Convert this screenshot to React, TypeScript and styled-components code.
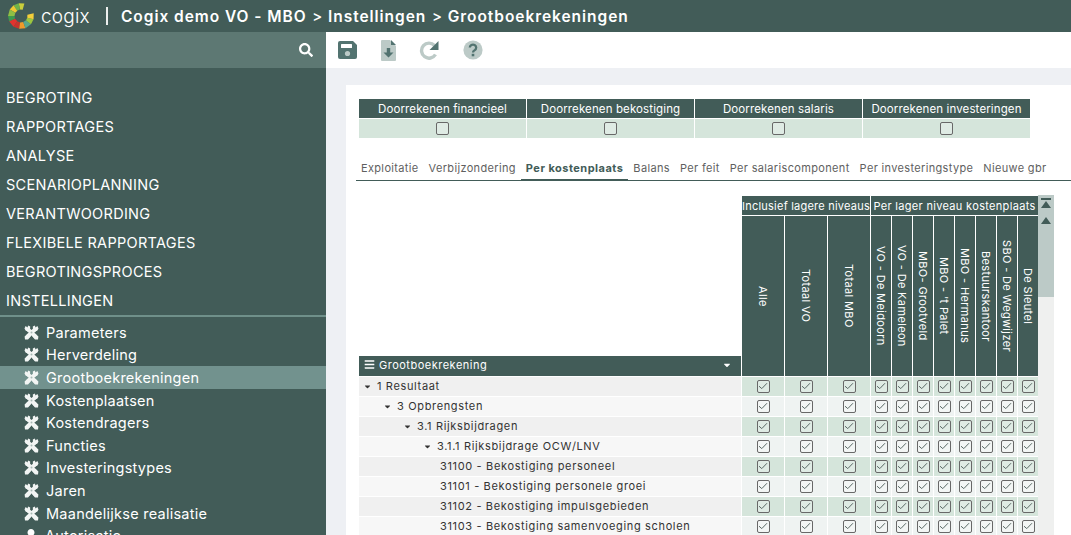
import React from "react";
import styled, { createGlobalStyle } from "styled-components";
import { FaSearch, FaBars, FaCaretDown, FaUser } from "react-icons/fa";

const Global = createGlobalStyle`
  html, body { margin: 0; padding: 0; height: 535px; overflow: hidden; background: #fff; }
  body { font-family: Inter, "Open Sans", sans-serif; }
  * { box-sizing: border-box; }
`;

const Page = styled.div`
  width: 1071px;
  height: 535px;
  display: flex;
  flex-direction: column;
  overflow: hidden;
`;

const Header = styled.header`
  height: 32px;
  flex: none;
  background: #425c58;
  color: #fff;
  display: flex;
  align-items: center;
  padding-left: 8px;
`;

const Brand = styled.span`
  font-size: 19px;
  font-weight: 300;
  margin-left: 7px;
  width: 65px;
  letter-spacing: 0.2px;
`;

const Divider = styled.span`
  width: 2px;
  height: 18px;
  background: #fff;
  opacity: 0.9;
  margin-right: 13px;
`;

const Crumb = styled.span`
  font-size: 15.5px;
  font-weight: 600;
  letter-spacing: 0.95px;
`;

const CrumbSep = styled.span`
  font-size: 15px;
  font-weight: 500;
  width: 21.5px;
  text-align: center;
`;

const Body = styled.div`
  flex: 1;
  display: flex;
  min-height: 0;
`;

const Sidebar = styled.aside`
  width: 326px;
  flex: none;
  background: #425c58;
  color: #fff;
  overflow: hidden;
`;

const SearchBar = styled.div`
  height: 36px;
  background: #5d7873;
  display: flex;
  align-items: center;
  justify-content: flex-end;
  padding-right: 13px;
  font-size: 14px;
  margin-bottom: 15px;
`;

const TopItem = styled.div<{ $open?: boolean }>`
  height: 29px;
  line-height: 29px;
  padding-left: 6px;
  font-size: 14.5px;
  font-weight: 400;
  text-transform: uppercase;
  letter-spacing: 0.3px;
  ${(p) => p.$open && "height: 31px; border-bottom: 2px solid #6f908a; margin-bottom: 4px;"}
`;

const SubItem = styled.div<{ $active?: boolean }>`
  height: 22.6px;
  display: flex;
  align-items: center;
  padding-left: 24px;
  gap: 7px;
  font-size: 14.5px;
  letter-spacing: 0.25px;
  background: ${(p) => (p.$active ? "#72928e" : "transparent")};
`;

const Main = styled.main`
  flex: 1;
  min-width: 0;
  display: flex;
  flex-direction: column;
  background: #eef0f4;
`;

const Toolbar = styled.div`
  height: 36px;
  flex: none;
  background: #fff;
  display: flex;
  align-items: center;
  padding-left: 11px;
  gap: 21px;
`;

const ToolButton = styled.span<{ $pushed?: boolean }>`
  width: 20px;
  height: 21px;
  display: flex;
  align-items: center;
  justify-content: center;
  margin-left: ${(p) => (p.$pushed ? 3 : 0)}px;
`;

const Content = styled.div`
  flex: 1;
  min-height: 0;
  padding: 17px 0 0 20px;
`;

const Panel = styled.section`
  height: 100%;
  background: #fff;
  padding: 14px 0 0 13px;
  overflow: hidden;
`;

const CalcTable = styled.div`
  display: grid;
  grid-template-columns: repeat(4, 167px);
  grid-template-rows: 19px 19px;
  gap: 1px;
`;

const CalcHead = styled.div`
  background: #425c58;
  color: #fff;
  font-size: 11.5px;
  letter-spacing: 0.12px;
  display: flex;
  align-items: center;
  justify-content: center;
`;

const CalcCell = styled.div`
  background: #d5e5db;
  display: flex;
  align-items: center;
  justify-content: center;
`;

const Tabs = styled.nav`
  display: flex;
  height: 23px;
  margin: 20px 0 15px -3px;
  border-bottom: 1px solid #425c58;
`;

const Tab = styled.span<{ $active?: boolean }>`
  padding: 0 5px;
  height: 22px;
  line-height: 20px;
  font-size: 11px;
  letter-spacing: ${(p) => (p.$active ? 0.48 : 0.34)}px;
  color: ${(p) => (p.$active ? "#425c58" : "#5f5f5f")};
  font-weight: ${(p) => (p.$active ? 700 : 400)};
  ${(p) => p.$active && "border-bottom: 2px solid #425c58; height: 23px;"}
`;

const MatrixWrap = styled.div`
  display: flex;
  align-items: flex-start;
`;

const Matrix = styled.div`
  display: grid;
  grid-template-columns: 382px repeat(3, 42px) repeat(8, 20px);
  grid-template-rows: 19px 160px;
  grid-auto-rows: 19px;
  gap: 1px;
`;

const Corner = styled.div`
  grid-row: 1 / span 2;
  display: flex;
  align-items: flex-end;
`;

const AccountHead = styled.div`
  width: 100%;
  height: 20px;
  background: #425c58;
  color: #fff;
  font-size: 11px;
  letter-spacing: 0.5px;
  display: flex;
  align-items: center;
  padding: 0 9px 3px 5px;
  gap: 4px;
`;

const HeadCaret = styled.span`
  margin-left: auto;
  display: flex;
  font-size: 10px;
`;

const GroupHead = styled.div<{ $span: number; $track: number }>`
  grid-column: span ${(p) => p.$span};
  background: #425c58;
  color: #fff;
  font-size: 11px;
  letter-spacing: ${(p) => p.$track}px;
  display: flex;
  align-items: center;
  justify-content: center;
  white-space: nowrap;
  overflow: hidden;
`;

const ColHead = styled.div`
  background: #425c58;
  color: #fff;
  font-size: 11px;
  letter-spacing: 0.35px;
  writing-mode: vertical-rl;
  display: flex;
  align-items: center;
  justify-content: center;
  white-space: nowrap;
  overflow: hidden;
`;

const RowLabel = styled.div<{ $level: number; $leaf?: boolean; $odd: boolean }>`
  background: ${(p) => (p.$odd ? "#f0f0f0" : "#f7f7f7")};
  color: #333;
  font-size: 11px;
  letter-spacing: 0.65px;
  display: flex;
  align-items: center;
  gap: 5px;
  white-space: nowrap;
  padding: 0 0 1px ${(p) => (p.$leaf ? 81 : 4 + p.$level * 20)}px;
`;

const RowCaret = styled.span`
  display: flex;
  font-size: 9px;
`;

const Cell = styled.div<{ $odd: boolean }>`
  background: ${(p) => (p.$odd ? "#d5e5db" : "#eff3f2")};
  display: flex;
  align-items: center;
  justify-content: center;
  padding-bottom: 1px;
`;

const Box = styled.span`
  width: 13px;
  height: 13px;
  border: 1.5px solid #686868;
  border-radius: 2px;
  background: rgba(255, 255, 255, 0.25);
  display: flex;
  align-items: center;
  justify-content: center;
`;

const Scrollbar = styled.div`
  width: 16px;
  height: 340px;
  margin-top: -1px;
  background: #eff0ef;
  flex: none;
`;

const Thumb = styled.div`
  height: 102px;
  background: #bccac7;
  display: flex;
  flex-direction: column;
  align-items: center;
  padding-top: 3px;
  gap: 8px;
`;

const CX = 13;
const CY = 13;
const polar = (r: number, deg: number) => {
  const a = (deg * Math.PI) / 180;
  return `${(CX + r * Math.cos(a)).toFixed(2)},${(CY + r * Math.sin(a)).toFixed(2)}`;
};
const logoSegments: [number, number, string][] = [
  [-75, -100, "#c9cf3c"],
  [-100, -125, "#6fb24a"],
  [-125, -150, "#f0c832"],
  [-150, -180, "#8fbf45"],
  [-180, -205, "#3f9a4e"],
  [-205, -235, "#e2332e"],
  [-235, -262, "#c8342c"],
  [-262, -290, "#ef9a2b"],
  [-290, -320, "#58a78c"],
  [-320, -345, "#9cc63f"],
  [-345, -372, "#f4cf3a"],
];

const Logo = () => (
  <svg width="26" height="26" viewBox="0 0 26 26">
    {logoSegments.map(([a, b, color]) => (
      <polygon
        key={a}
        fill={color}
        points={`${polar(13, a)} ${polar(13, b)} ${polar(6.5, b)} ${polar(6.5, a)}`}
      />
    ))}
  </svg>
);

const ToolsIcon = () => (
  <svg width="15" height="15" viewBox="0 0 15 15">
    <path d="M3 3.5 L12 12 M12 3.5 L3 12" stroke="#f2f5f4" strokeWidth="3.8" fill="none" />
    <path d="M0.5 3.4 L1.6 1 L3.6 2.4 L4 0.6 L6.2 1.6 L6 5 L4 6.4 L1.6 5.6 Z" fill="#f2f5f4" />
    <path d="M14.5 3.4 L13.4 1 L11.4 2.4 L11 0.6 L8.8 1.6 L9 5 L11 6.4 L13.4 5.6 Z" fill="#f2f5f4" />
    <path d="M0.6 11.6 L4 8.6 L6.8 11.2 L4 14.6 L1 14.4 Z" fill="#f2f5f4" />
    <path d="M14.4 11.6 L11 8.6 L8.2 11.2 L11 14.6 L14 14.4 Z" fill="#f2f5f4" />
    <circle cx="7.5" cy="7.6" r="1" fill="#a9bab6" />
  </svg>
);

const SaveIcon = () => (
  <svg width="19" height="18" viewBox="0 0 19 18">
    <path d="M2 0 H15 L19 4 V16 A2 2 0 0 1 17 18 H2 A2 2 0 0 1 0 16 V2 A2 2 0 0 1 2 0 Z" fill="#527370" />
    <rect x="3" y="3" width="11" height="4" rx="0.5" fill="#fff" />
    <circle cx="9.5" cy="12.5" r="2.6" fill="#bccac7" />
  </svg>
);

const FileIcon = () => (
  <svg width="15" height="21" viewBox="0 0 15 21">
    <path d="M1 0 H9 L15 6 V20 A1 1 0 0 1 14 21 H1 A1 1 0 0 1 0 20 V1 A1 1 0 0 1 1 0 Z" fill="#bccac7" />
    <path d="M10 0 L15 5 H10 Z" fill="#527370" />
    <path d="M5.8 8 H9.2 V12.5 H12.5 L7.5 17.5 L2.5 12.5 H5.8 Z" fill="#527370" />
  </svg>
);

const RedoIcon = () => (
  <svg width="20" height="19" viewBox="0 0 20 19">
    <path d="M15.5 4.5 A7.5 7.5 0 1 0 16.5 13.5" fill="none" stroke="#bccac7" strokeWidth="3.4" />
    <path d="M19.5 0 V9 H10.5 Z" fill="#527370" />
  </svg>
);

const HelpIcon = () => (
  <svg width="20" height="20" viewBox="0 0 20 20">
    <circle cx="10" cy="10" r="9.6" fill="#bccac7" />
    <path d="M6.8 7.6 A3.2 3 0 1 1 11.6 10.2 Q10 11 10 12.6" fill="none" stroke="#527370" strokeWidth="2.3" />
    <rect x="8.7" y="13.8" width="2.6" height="2.5" fill="#527370" />
  </svg>
);

const Check = () => (
  <svg width="10" height="8" viewBox="0 0 10 8">
    <path d="M1 4.2 L3.8 6.6 L9 1.2" fill="none" stroke="#5a6a66" strokeWidth="1" />
  </svg>
);

const Checkbox = ({ checked }: { checked?: boolean }) => <Box>{checked && <Check />}</Box>;

const topItems = ["Begroting", "Rapportages", "Analyse", "Scenarioplanning", "Verantwoording", "Flexibele rapportages", "Begrotingsproces"];
const subItems = ["Parameters", "Herverdeling", "Grootboekrekeningen", "Kostenplaatsen", "Kostendragers", "Functies", "Investeringstypes", "Jaren", "Maandelijkse realisatie"];
const calcs = ["Doorrekenen financieel", "Doorrekenen bekostiging", "Doorrekenen salaris", "Doorrekenen investeringen"];
const tabs = ["Exploitatie", "Verbijzondering", "Per kostenplaats", "Balans", "Per feit", "Per salariscomponent", "Per investeringstype", "Nieuwe gbr"];
const cols = ["Alle", "Totaal VO", "Totaal MBO", "VO - De Meidoorn", "VO - De Kameleon", "MBO- Grootveld", "MBO - 't Palet", "MBO - Hermanus", "Bestuurskantoor", "SBO - De Wegwijzer", "De Sleutel"];
const rows = [
  { label: "1 Resultaat", level: 0 },
  { label: "3 Opbrengsten", level: 1 },
  { label: "3.1 Rijksbijdragen", level: 2 },
  { label: "3.1.1 Rijksbijdrage OCW/LNV", level: 3 },
  { label: "31100 - Bekostiging personeel", level: 4, leaf: true },
  { label: "31101 - Bekostiging personele groei", level: 4, leaf: true },
  { label: "31102 - Bekostiging impulsgebieden", level: 4, leaf: true },
  { label: "31103 - Bekostiging samenvoeging scholen", level: 4, leaf: true },
];

export default function App() {
  return (
    <Page>
      <Global />
      <Header>
        <Logo />
        <Brand>cogix</Brand>
        <Divider />
        <Crumb>Cogix demo VO - MBO</Crumb>
        <CrumbSep>&gt;</CrumbSep>
        <Crumb>Instellingen</Crumb>
        <CrumbSep>&gt;</CrumbSep>
        <Crumb>Grootboekrekeningen</Crumb>
      </Header>
      <Body>
        <Sidebar>
          <SearchBar>
            <FaSearch />
          </SearchBar>
          {topItems.map((t) => (
            <TopItem key={t}>{t}</TopItem>
          ))}
          <TopItem $open>Instellingen</TopItem>
          {subItems.map((s) => (
            <SubItem key={s} $active={s === "Grootboekrekeningen"}>
              <ToolsIcon />
              {s}
            </SubItem>
          ))}
          <SubItem>
            <FaUser size={14} />
            Autorisatie
          </SubItem>
        </Sidebar>
        <Main>
          <Toolbar>
            <ToolButton><SaveIcon /></ToolButton>
            <ToolButton><FileIcon /></ToolButton>
            <ToolButton><RedoIcon /></ToolButton>
            <ToolButton $pushed><HelpIcon /></ToolButton>
          </Toolbar>
          <Content>
            <Panel>
              <CalcTable>
                {calcs.map((c) => (
                  <CalcHead key={c}>{c}</CalcHead>
                ))}
                {calcs.map((c) => (
                  <CalcCell key={c}>
                    <Checkbox />
                  </CalcCell>
                ))}
              </CalcTable>
              <Tabs>
                {tabs.map((t) => (
                  <Tab key={t} $active={t === "Per kostenplaats"}>{t}</Tab>
                ))}
              </Tabs>
              <MatrixWrap>
                <Matrix>
                  <Corner>
                    <AccountHead>
                      <FaBars size={11} />
                      Grootboekrekening
                      <HeadCaret><FaCaretDown /></HeadCaret>
                    </AccountHead>
                  </Corner>
                  <GroupHead $span={3} $track={0.22}>Inclusief lagere niveaus</GroupHead>
                  <GroupHead $span={8} $track={0.32}>Per lager niveau kostenplaats</GroupHead>
                  {cols.map((c) => (
                    <ColHead key={c}>{c}</ColHead>
                  ))}
                  {rows.map((r, i) => (
                    <React.Fragment key={r.label}>
                      <RowLabel $level={r.level} $leaf={r.leaf} $odd={i % 2 === 0}>
                        {!r.leaf && <RowCaret><FaCaretDown /></RowCaret>}
                        {r.label}
                      </RowLabel>
                      {cols.map((c) => (
                        <Cell key={c} $odd={i % 2 === 0}>
                          <Checkbox checked />
                        </Cell>
                      ))}
                    </React.Fragment>
                  ))}
                </Matrix>
                <Scrollbar>
                  <Thumb>
                    <svg width="12" height="11" viewBox="0 0 12 11">
                      <rect x="1" y="0" width="10" height="2" fill="#425c58" />
                      <polygon points="6,3 11,10 1,10" fill="#425c58" />
                    </svg>
                    <svg width="12" height="7" viewBox="0 0 12 7">
                      <polygon points="6,0 11,7 1,7" fill="#425c58" />
                    </svg>
                  </Thumb>
                </Scrollbar>
              </MatrixWrap>
            </Panel>
          </Content>
        </Main>
      </Body>
    </Page>
  );
}
